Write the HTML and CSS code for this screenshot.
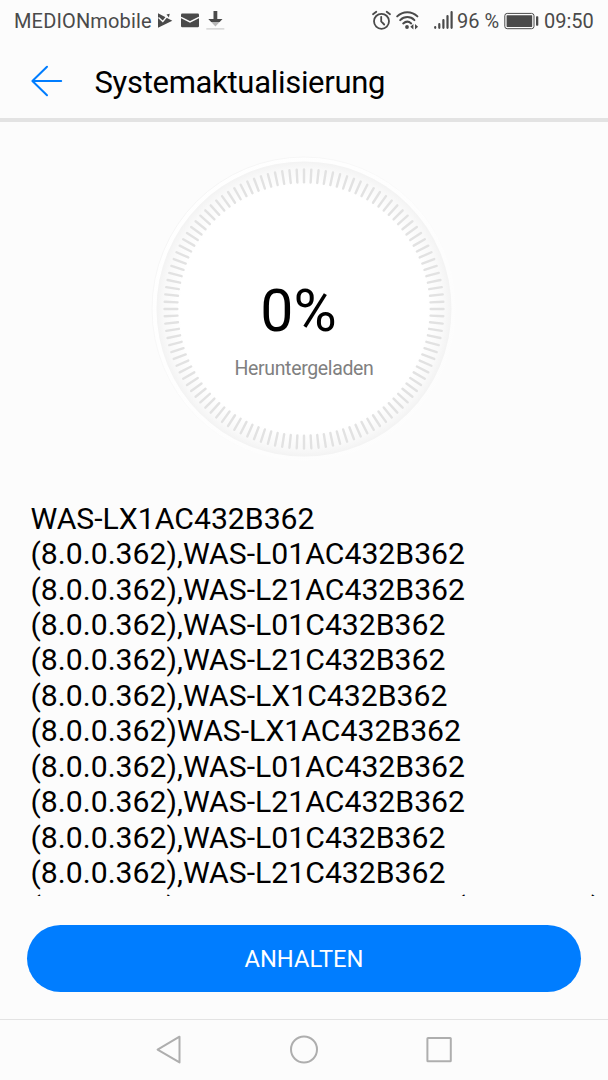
FILE: index.html
```html
<!DOCTYPE html>
<html lang="de">
<head>
<meta charset="utf-8">
<title>Systemaktualisierung</title>
<link rel="stylesheet" href="styles.css">
</head>
<body>
<div class="screen">
  <div class="statusbar">
    <span class="carrier">MEDIONmobile</span>
    <svg class="notifications" width="72" height="42" viewBox="154 0 72 42">
      <path fill="#4a4a4a" d="M158 13.200 172.300 20.700 158 27.800z"/>
      <path fill="none" stroke="#fcfcfc" stroke-width="1.300" d="M158.500 17.500l4.300 4 7-8.500"/>
      <path fill="#4a4a4a" d="M166.500 14.500l3.200-.8-.8 3.800z"/>
      <rect x="181" y="13.600" width="18" height="13.600" rx="1.200" fill="#4a4a4a"/>
      <path fill="none" stroke="#fcfcfc" stroke-width="1.500" d="M181 17.300l9 4.500 9-4.500"/>
      <path fill="#4a4a4a" d="M213.500 11h3.800v8h5.200l-2.800 3h-8.600l-2.800-3h5.200z"/>
      <path fill="#b8b8b8" d="M211.200 22h8.400l-4.200 4.400z"/>
      <path stroke="#cfcfcf" stroke-width="1.300" d="M206.300 28.900h18"/>
    </svg>
    <span class="spacer"></span>
    <svg class="signals" width="90" height="42" viewBox="367 0 90 42">
      <g fill="none" stroke="#4a4a4a" stroke-linecap="round">
        <circle cx="381.500" cy="21.300" r="7.500" stroke-width="1.800"/>
        <path stroke-width="1.800" d="M381.200 16.800v4.700l3 3M373 14.300l3.300-2.600M386.700 11.700l3.300 2.600"/>
        <path stroke-width="2" d="M397.200 16.400c5.500-5.600 14.700-5.600 20.200 0M400.200 20.100c4.100-4 10.300-4 14.200 0M403.200 23.400c2.500-2.200 5.600-2.200 8 0"/>
      </g>
      <circle cx="407" cy="27" r="1.900" fill="#4a4a4a"/>
      <path fill="#4a4a4a" d="M413.400 24v5.600l-3.100-2.800zM415 24v5.600l3.100-2.800z"/>
      <path fill="none" stroke="#4a4a4a" stroke-width="2.200" stroke-linecap="round" d="M435.200 27.200v.6M439.300 24.200v3.600M443.400 20.100v7.700M447.500 16.100v11.700M451.600 12v15.800"/>
    </svg>
    <span class="percent">96 %</span>
    <svg class="battery" width="35" height="42" viewBox="504 0 35 42">
      <rect x="504.800" y="13.400" width="29.200" height="15.300" rx="2.400" fill="none" stroke="#4a4a4a" stroke-width="1"/>
      <rect x="506.600" y="15.200" width="25.600" height="11.700" rx=".6" fill="#4a4a4a"/>
      <rect x="536" y="16.300" width="2.300" height="9.500" rx=".7" fill="#4a4a4a"/>
    </svg>
    <span class="clock">09:50</span>
  </div>

  <header class="appbar">
    <svg class="back" width="34" height="34" viewBox="30 64 34 34" fill="none" stroke="#007dff" stroke-width="2" stroke-linecap="round" stroke-linejoin="round">
      <path d="M61.200 81H32.600M47 66.800 32.400 81 47 95.200"/>
    </svg>
    <h1 class="title">Systemaktualisierung</h1>
  </header>

  <section class="progress">
    <svg class="dial" width="310" height="310" viewBox="-155 -155 310 310">
      <defs>
        <radialGradient id="face" gradientUnits="userSpaceOnUse" cx="0" cy="0" r="147.500">
          <stop offset=".84" stop-color="#fff"/>
          <stop offset=".95" stop-color="#f9f9f9"/>
          <stop offset="1" stop-color="#f3f3f3"/>
        </radialGradient>
        <linearGradient id="rim" x1="0" y1="0" x2="1" y2="1">
          <stop offset="0" stop-color="#f3f3f3"/>
          <stop offset=".65" stop-color="#fcfcfc"/>
        </linearGradient>
        <linearGradient id="halo" x1="0" y1="0" x2="1" y2="1">
          <stop offset="0" stop-color="#fff"/>
          <stop offset="1" stop-color="#fcfcfc"/>
        </linearGradient>
      </defs>
      <circle r="152" fill="url(#halo)" stroke="url(#rim)"/>
      <circle r="147.500" fill="url(#face)"/>
      <g id="ticks" class="ticks"></g>
    </svg>
    <div class="reading">
      <div class="value">0%</div>
      <div class="caption">Heruntergeladen</div>
    </div>
  </section>

  <main class="versions">WAS-LX1AC432B362
(8.0.0.362),WAS-L01AC432B362
(8.0.0.362),WAS-L21AC432B362
(8.0.0.362),WAS-L01C432B362
(8.0.0.362),WAS-L21C432B362
(8.0.0.362),WAS-LX1C432B362
(8.0.0.362)WAS-LX1AC432B362
(8.0.0.362),WAS-L01AC432B362
(8.0.0.362),WAS-L21AC432B362
(8.0.0.362),WAS-L01C432B362
(8.0.0.362),WAS-L21C432B362
(8.0.0.362),WAS-LX1C432B362 (8.0.0.362)</main>

  <div class="actions"><button class="pause" type="button">ANHALTEN</button></div>

  <nav class="navbar">
    <svg width="304" height="60" viewBox="152 1020 304 60" fill="none" stroke="#aeaeae" stroke-width="2" stroke-linejoin="round">
      <path d="M179.500 1036.700v25.700L157.600 1049.600z"/>
      <circle cx="304" cy="1049.500" r="13"/>
      <rect x="427.400" y="1037.900" width="23.400" height="23.400" rx=".6"/>
    </svg>
  </nav>
</div>
<script src="dial.js"></script>
</body>
</html>
```
FILE: styles.css
```css
* {
  box-sizing: border-box;
}

body {
  margin: 0;
  background: #fcfcfc;
  font-family: Roboto, "Liberation Sans", sans-serif;
  color: #000;
}

.screen {
  display: flex;
  flex-direction: column;
  width: 608px;
  height: 1080px;
  overflow: hidden;
}

.statusbar {
  display: flex;
  align-items: center;
  flex: 0 0 42px;
  padding: 0 14px;
  font-size: 20px;
  line-height: 42px;
  color: #4a4a4a;
  white-space: nowrap;
}

.carrier {
  width: 140px;
  letter-spacing: 0.15px;
}

.spacer {
  flex: 1;
}

.percent {
  width: 47px;
}

.clock {
  width: 50px;
  margin-left: 5px;
}

.appbar {
  display: flex;
  align-items: center;
  flex: 0 0 80px;
  padding: 2px 0 0 30px;
  border-bottom: 4px solid #e3e3e3;
}

.title {
  margin: 4px 0 0 30.5px;
  font-size: 31px;
  font-weight: 400;
  line-height: 40px;
  letter-spacing: -0.3px;
}

.progress {
  display: grid;
  flex: 0 0 378.8px;
  justify-items: center;
  align-items: start;
  padding-top: 31.5px;
}

.dial,
.reading {
  grid-area: 1 / 1;
}

.ticks {
  stroke: #e2e2e2;
  stroke-width: 2.4;
  stroke-linecap: round;
}

.reading {
  padding-top: 122px;
  text-align: center;
}

.value {
  margin-left: -11px;
  font-size: 59px;
  line-height: 70px;
}

.caption {
  margin-top: 11px;
  font-size: 19.5px;
  line-height: 24px;
  letter-spacing: -0.35px;
  color: #808080;
}

.versions {
  flex: 0 0 395.2px;
  padding-left: 30.5px;
  overflow: hidden;
  font-size: 30.2px;
  line-height: 35.42px;
  white-space: pre;
}

.actions {
  flex: 0 0 123px;
  padding: 29px 27px 0;
}

.pause {
  display: block;
  width: 100%;
  height: 67px;
  padding: 3px 0 0;
  border: 0;
  border-radius: 34px;
  background: #007dff;
  color: #fff;
  font: 400 23.7px/1 Roboto, "Liberation Sans", sans-serif;
}

.navbar {
  flex: 1;
  display: flex;
  justify-content: center;
  border-top: 1px solid #e3e3e3;
}
```
FILE: dial.js
```js
const ticks = document.getElementById('ticks');
for (let i = 0; i < 120; i++) {
  const line = document.createElementNS('http://www.w3.org/2000/svg', 'line');
  line.setAttribute('y1', -126.7);
  line.setAttribute('y2', -139.5);
  line.setAttribute('transform', `rotate(${i * 3})`);
  ticks.appendChild(line);
}
```
